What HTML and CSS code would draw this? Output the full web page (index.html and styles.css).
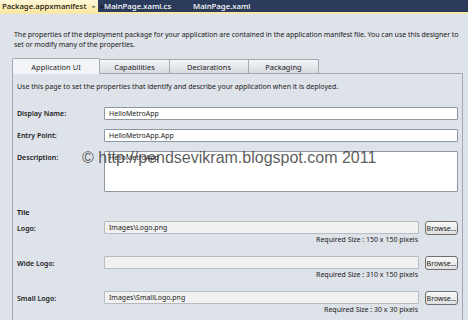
FILE: index.html
```html
<!doctype html>
<html lang="en">
<head>
    <meta charset="UTF-8">
    <title>Package.appxmanifest</title>
    <link rel="stylesheet" href="styles.css">
</head>
<body>
    <div class="doc-tabs">
        <div class="doc-tab active">Package.appxmanifest <span class="pin">&#9901;</span> <span class="close">&#10005;</span></div>
        <div class="doc-tab">MainPage.xaml.cs</div>
        <div class="doc-tab">MainPage.xaml</div>
    </div>
    <div class="doc-line"></div>

    <p class="intro">The properties of the deployment package for your application are contained in the application manifest file. You can use this designer to set or modify many of the properties.</p>

    <div class="tabs">
        <div class="tab active">Application UI</div>
        <div class="tab">Capabilities</div>
        <div class="tab">Declarations</div>
        <div class="tab">Packaging</div>
    </div>

    <div class="panel">
        <p class="hint">Use this page to set the properties that identify and describe your application when it is deployed.</p>

        <div class="field">
            <label>Display Name:</label>
            <div class="input">HelloMetroApp</div>
        </div>
        <div class="field">
            <label>Entry Point:</label>
            <div class="input">HelloMetroApp.App</div>
        </div>
        <div class="field">
            <label>Description:</label>
            <div class="input textarea">HelloMetroApp</div>
        </div>

        <h3 class="section">Tile</h3>

        <div class="field file">
            <label>Logo:</label>
            <div class="file-col">
                <div class="file-row">
                    <div class="input readonly">Images\Logo.png</div>
                    <button class="browse">Browse...</button>
                </div>
                <div class="size">Required Size : 150 x 150 pixels</div>
            </div>
        </div>
        <div class="field file">
            <label>Wide Logo:</label>
            <div class="file-col">
                <div class="file-row">
                    <div class="input readonly"></div>
                    <button class="browse">Browse...</button>
                </div>
                <div class="size">Required Size : 310 x 150 pixels</div>
            </div>
        </div>
        <div class="field file">
            <label>Small Logo:</label>
            <div class="file-col">
                <div class="file-row">
                    <div class="input readonly">Images\SmallLogo.png</div>
                    <button class="browse">Browse...</button>
                </div>
                <div class="size">Required Size : 30 x 30 pixels</div>
            </div>
        </div>
    </div>

    <div class="watermark">&copy; http://pendsevikram.blogspot.com 2011</div>
</body>
</html>
```

FILE: styles.css
```css
:root {
    --bg: #dee2e9;
    --text: #1b1b1b;
    --border: #a3a9b2;
}

html, body {
    margin: 0;
    padding: 0;
}

body {
    width: 468px;
    height: 320px;
    overflow: hidden;
    position: relative;
    background: var(--bg);
    color: var(--text);
    font-family: 'Noto Sans', sans-serif;
    font-size: 7px;
}

.doc-tabs {
    height: 12px;
    display: flex;
    align-items: stretch;
    background: #2a3b5b;
    color: #fff;
}

.doc-tab {
    padding: 0 2px;
    width: 85px;
    line-height: 12px;
    font-size: 7.8px;
    font-weight: 500;
    white-space: nowrap;
}

.doc-tab:nth-child(2) {
    margin-left: 4px;
}

.doc-tab.active {
    width: 94px;
    background: linear-gradient(#fff8d8, #fbe9a6);
    color: #111;
}

.doc-tab .pin {
    color: #666;
    font-size: 6px;
    margin-left: 3px;
}

.doc-tab .close {
    font-size: 7px;
    margin-left: 1px;
}

.doc-line {
    height: 2px;
    background: #f7e7a8;
}

.intro {
    margin: 16px 8px 0 14px;
    line-height: 10px;
    letter-spacing: -0.04px;
}

.tabs {
    display: flex;
    margin: 7px 0 0 12px;
    height: 16px;
    align-items: flex-end;
}

.tab {
    width: 70px;
    height: 14px;
    line-height: 14px;
    text-align: center;
    font-size: 7.5px;
    border: 1px solid var(--border);
    border-bottom: none;
    border-left: none;
    background: linear-gradient(#f4f5f7, #d7dbe1);
    box-sizing: border-box;
}

.tab.active {
    width: 88px;
    height: 16px;
    line-height: 16px;
    border-left: 1px solid var(--border);
    background: #f3f4f7;
    border-radius: 2px 2px 0 0;
    margin-bottom: -1px;
    position: relative;
}

.tab:nth-child(3) {
    width: 79px;
}

.panel {
    margin: 0 5px 0 12px;
    height: 260px;
    border: 1px solid var(--border);
    border-bottom: none;
    padding: 8px 4px 0 4px;
}

.hint {
    margin: 0 0 15px 0;
    line-height: 10px;
}

.field {
    display: grid;
    grid-template-columns: 87px 354px;
    margin-bottom: 9px;
}

.field label {
    font-weight: 600;
    padding-top: 2px;
    font-size: 7px;
}

.input {
    height: 13px;
    box-sizing: border-box;
    border: 1px solid #8e96a0;
    background: #fff;
    padding: 1px 4px;
    line-height: 10px;
    font-size: 7px;
    border-radius: 1px;
}

.input.textarea {
    height: 41px;
}

.section {
    margin: 16px 0 4px 0;
    font-size: 7px;
    font-weight: 700;
}

.field.file {
    margin-bottom: 12px;
}

.field.file label {
    padding-top: 3px;
}

.file-row {
    display: flex;
    gap: 6px;
}

.input.readonly {
    flex: 1;
    background: #f1f1f1;
    border-color: #b8bcc2;
}

.browse {
    width: 33px;
    height: 14px;
    padding: 0;
    font-family: inherit;
    font-size: 7px;
    color: var(--text);
    background: linear-gradient(#f8f8f8, #e0e0e0);
    border: 1px solid #6f6f6f;
    border-radius: 3px;
}

.size {
    text-align: right;
    padding-right: 40px;
    line-height: 9px;
    font-size: 7px;
}

.watermark {
    position: absolute;
    left: 82px;
    top: 149px;
    font-family: 'Liberation Sans', Arial, sans-serif;
    font-size: 16px;
    color: rgba(50, 50, 50, 0.8);
    white-space: nowrap;
}
```
